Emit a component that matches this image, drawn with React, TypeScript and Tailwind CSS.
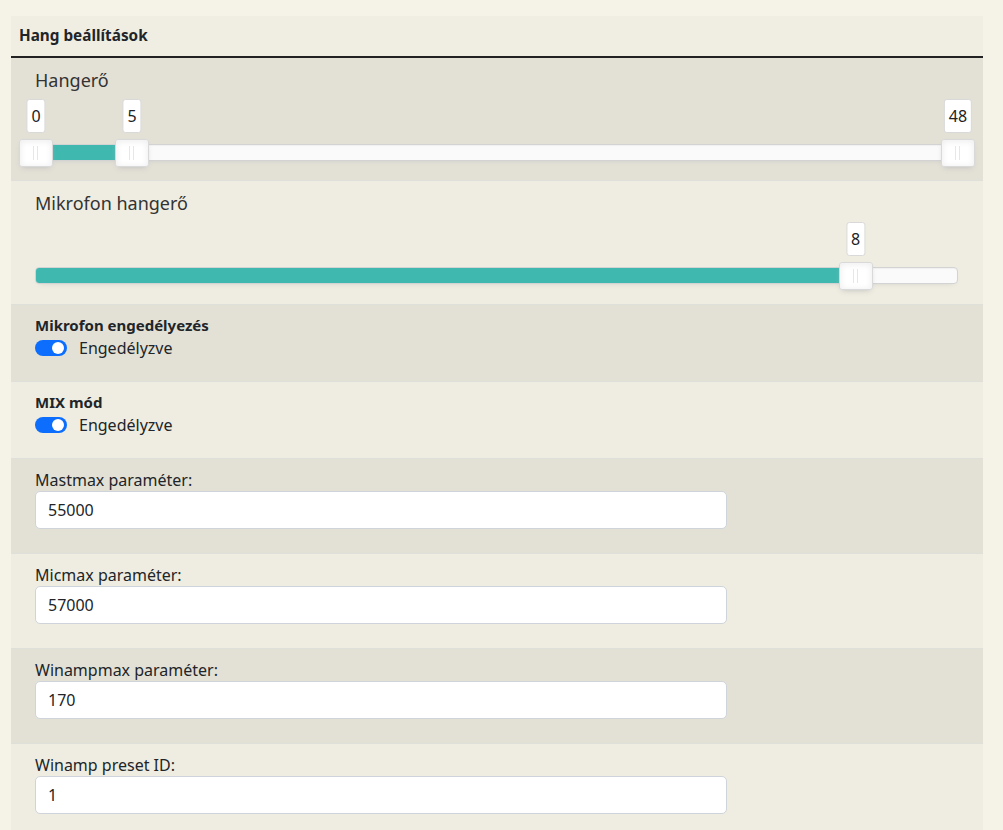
import React from "react";

const FONT = "font-['Noto_Sans',sans-serif]";

function Handle({ left, value }: { left: number; value: number }) {
  return (
    <div
      className="absolute top-[-6px] h-[28px] w-[34px] -translate-x-1/2 rounded-[3px] border border-[#d9d9d9] bg-white shadow-[inset_0_0_1px_#fff,inset_0_1px_7px_#ebebeb,0_3px_6px_-3px_#bbb]"
      style={{ left }}
    >
      <div className="absolute left-[13px] top-[6px] h-[14px] w-px bg-[#e8e7e6]" />
      <div className="absolute left-[17px] top-[6px] h-[14px] w-px bg-[#e8e7e6]" />
      <div className="absolute bottom-[33px] left-1/2 -translate-x-1/2 whitespace-nowrap rounded-[3px] border border-[#d9d9d9] bg-white px-[4px] py-[5px] text-[16px] leading-[22px] text-[#222]">
        {value}
      </div>
    </div>
  );
}

function Slider({
  min,
  max,
  values,
  connect,
}: {
  min: number;
  max: number;
  values: number[];
  connect: [number, number];
}) {
  const W = 923;
  const pos = (v: number) => ((v - min) / (max - min)) * (W - 1);
  const a = connect[0];
  const b = connect[1];
  return (
    <div className="relative mt-[50px] h-[17px] w-[923px] rounded-[4px] border border-[#d3d3d3] bg-[#fafafa] shadow-[inset_0_1px_1px_#f0f0f0,0_3px_6px_-5px_#bbb]">
      <div
        className="absolute top-0 bottom-0 rounded-l-[3px] bg-[#3fb8af]"
        style={{ left: pos(a), width: pos(b) - pos(a) }}
      />
      {values.map((v, i) => (
        <Handle key={i} left={pos(v)} value={v} />
      ))}
    </div>
  );
}

function Toggle({ label, text }: { label: string; text: string }) {
  return (
    <div className="flex flex-col">
      <div className="text-[15px] font-bold leading-[22px] text-[#212529]">{label}</div>
      <div className="flex h-[24px] items-center gap-[12px]">
        <div className="relative h-[16px] w-[32px] rounded-full bg-[#0d6efd]">
          <div className="absolute right-[3px] top-[2px] h-[12px] w-[12px] rounded-full bg-white" />
        </div>
        <span className="text-[16px] leading-[24px] text-[#212529]">{text}</span>
      </div>
    </div>
  );
}

function Field({ label, value }: { label: string; value: string }) {
  return (
    <div className="flex flex-col">
      <div className="text-[16px] leading-[22px] text-[#212529]">{label}</div>
      <div className="flex h-[38px] w-[692px] items-center rounded-[5px] border border-[#ced4da] bg-white px-[12px] text-[16px] text-[#212529]">
        {value}
      </div>
    </div>
  );
}

export default function App() {
  return (
    <div className={`min-h-[830px] w-full bg-[#f5f3e7] pt-[16px] ${FONT}`}>
      <div className="ml-[11px] w-[972px]">
        <div className="flex h-[42px] items-center border-b-2 border-[#222] bg-[#f0eee2] px-[8px] pb-[2px]">
          <span className="text-[15.3px] font-bold text-[#212529]">Hang beállítások</span>
        </div>

        <div className="border-b border-[#e0e0da] bg-[#e3e1d6] px-[24px] pt-[9px] pb-[19px]">
          <div className="h-[27px] text-[18px] leading-[27px] text-[#333]">Hangerő</div>
          <Slider min={0} max={48} values={[0, 5, 48]} connect={[0, 5]} />
        </div>

        <div className="border-b border-[#e0e0da] bg-[#efede1] px-[24px] pt-[9px] pb-[20px]">
          <div className="h-[27px] text-[18px] leading-[27px] text-[#333]">Mikrofon hangerő</div>
          <Slider min={0} max={9} values={[8]} connect={[0, 8]} />
        </div>

        <div className="border-b border-[#e0e0da] bg-[#e3e1d6] px-[24px] pt-[9px] pb-[21px]">
          <Toggle label="Mikrofon engedélyezés" text="Engedélyzve" />
        </div>

        <div className="border-b border-[#e0e0da] bg-[#efede1] px-[24px] pt-[9px] pb-[21px]">
          <Toggle label="MIX mód" text="Engedélyzve" />
        </div>

        <div className="border-b border-[#e0e0da] bg-[#e3e1d6] px-[24px] pt-[10px] pb-[24px]">
          <Field label="Mastmax paraméter:" value="55000" />
        </div>

        <div className="border-b border-[#e0e0da] bg-[#efede1] px-[24px] pt-[10px] pb-[24px]">
          <Field label="Micmax paraméter:" value="57000" />
        </div>

        <div className="border-b border-[#e0e0da] bg-[#e3e1d6] px-[24px] pt-[10px] pb-[24px]">
          <Field label="Winampmax paraméter:" value="170" />
        </div>

        <div className="border-b border-[#e0e0da] bg-[#efede1] px-[24px] pt-[10px] pb-[24px]">
          <Field label="Winamp preset ID:" value="1" />
        </div>
      </div>
    </div>
  );
}
